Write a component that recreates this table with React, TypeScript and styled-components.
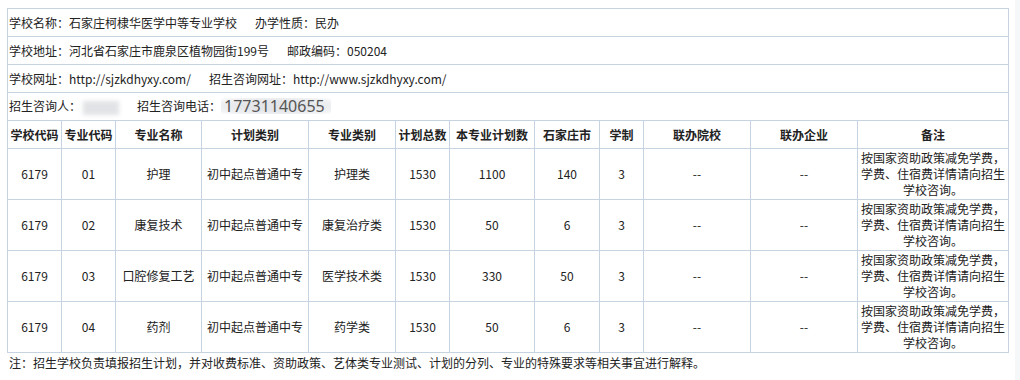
import styled, { createGlobalStyle } from "styled-components";

const GlobalStyle = createGlobalStyle`
  html, body {
    margin: 0;
    padding: 0;
    background: linear-gradient(to right, #ffffff 1015px, #f6f7f9 1015px);
  }
  body {
    font-family: "Microsoft YaHei", "Noto Sans CJK SC", sans-serif;
    font-size: 12px;
    color: #222;
  }
`;

const Page = styled.div`
  padding: 8px 0 0 7px;
`;

const Table = styled.table`
  border-collapse: collapse;
  table-layout: fixed;
  width: 1001px;
`;

const InfoCell = styled.td`
  border: 1px solid #c6d4e2;
  height: 27px;
  padding: 0 1px;
  line-height: 16px;
  white-space: nowrap;
`;

const Gap = styled.span`
  display: inline-block;
  width: 18px;
`;

const Blurred = styled.span`
  display: inline-block;
  width: 36px;
  height: 14px;
  margin-left: 2px;
  vertical-align: middle;
  background: #e2e3e6;
  filter: blur(2px);
`;

const Phone = styled.span`
  display: inline-block;
  padding: 0 6px 0 3px;
  font-family: "Noto Sans", sans-serif;
  font-size: 16px;
  line-height: 16px;
  color: #555;
  vertical-align: -1px;
  background: radial-gradient(ellipse at center, #e4e5e8 40%, #f1f2f4 80%, #fff 100%);
`;

const HeadCell = styled.th`
  border: 1px solid #c6d4e2;
  height: 27px;
  padding: 0;
  font-weight: bold;
  text-align: center;
  line-height: 16px;
  white-space: nowrap;
`;

const Cell = styled.td<{ $wrap?: boolean }>`
  border: 1px solid #c6d4e2;
  height: 50px;
  padding: 0 2px;
  text-align: center;
  line-height: 16px;
  white-space: ${(p) => (p.$wrap ? "normal" : "nowrap")};
`;

const Note = styled.div`
  padding: 2px 0 0 2px;
  line-height: 16px;
`;

const widths = [54, 54, 86, 107, 87, 54, 85, 65, 44, 107, 107, 151];
const heads = [
  "学校代码",
  "专业代码",
  "专业名称",
  "计划类别",
  "专业类别",
  "计划总数",
  "本专业计划数",
  "石家庄市",
  "学制",
  "联办院校",
  "联办企业",
  "备注",
];

const rows = [
  ["6179", "01", "护理", "初中起点普通中专", "护理类", "1530", "1100", "140", "3"],
  ["6179", "02", "康复技术", "初中起点普通中专", "康复治疗类", "1530", "50", "6", "3"],
  ["6179", "03", "口腔修复工艺", "初中起点普通中专", "医学技术类", "1530", "330", "50", "3"],
  ["6179", "04", "药剂", "初中起点普通中专", "药学类", "1530", "50", "6", "3"],
];

const remark = "按国家资助政策减免学费，学费、住宿费详情请向招生学校咨询。";

export default function App() {
  return (
    <Page>
      <GlobalStyle />
      <Table>
        <colgroup>
          {widths.map((w, i) => (
            <col key={i} style={{ width: w }} />
          ))}
        </colgroup>
        <tbody>
          <tr>
            <InfoCell colSpan={12}>
              学校名称：石家庄柯棣华医学中等专业学校
              <Gap />
              办学性质：民办
            </InfoCell>
          </tr>
          <tr>
            <InfoCell colSpan={12}>
              学校地址：河北省石家庄市鹿泉区植物园街199号
              <Gap />
              邮政编码：050204
            </InfoCell>
          </tr>
          <tr>
            <InfoCell colSpan={12}>
              学校网址：http://sjzkdhyxy.com/
              <Gap />
              招生咨询网址：http://www.sjzkdhyxy.com/
            </InfoCell>
          </tr>
          <tr>
            <InfoCell colSpan={12}>
              招生咨询人：
              <Blurred />
              <Gap />
              招生咨询电话：<Phone>17731140655</Phone>
            </InfoCell>
          </tr>
          <tr>
            {heads.map((h) => (
              <HeadCell key={h}>{h}</HeadCell>
            ))}
          </tr>
          {rows.map((r, i) => (
            <tr key={i}>
              {r.map((c, j) => (
                <Cell key={j}>{c}</Cell>
              ))}
              <Cell>--</Cell>
              <Cell>--</Cell>
              <Cell $wrap>{remark}</Cell>
            </tr>
          ))}
        </tbody>
      </Table>
      <Note>
        注：招生学校负责填报招生计划，并对收费标准、资助政策、艺体类专业测试、计划的分列、专业的特殊要求等相关事宜进行解释。
      </Note>
    </Page>
  );
}
